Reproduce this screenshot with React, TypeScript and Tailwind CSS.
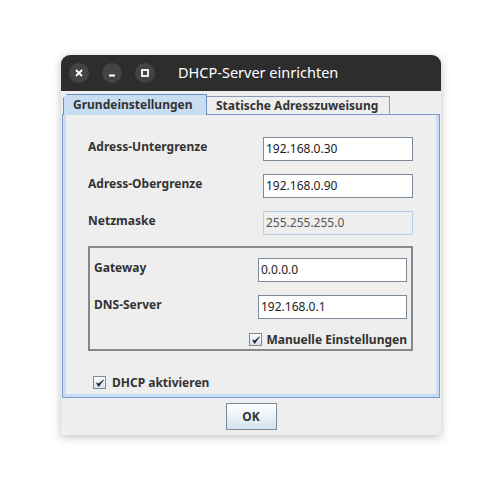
import { useState } from "react";

const font = { fontFamily: '"Noto Sans", "Open Sans", sans-serif' };

function CheckMark() {
  return (
    <svg width="8" height="8" viewBox="0 0 8 8">
      <path d="M0.5 4 L2.6 7.5 L7.6 0.8 L2.8 4.8 Z" fill="#1a1a1a" stroke="#1a1a1a" strokeWidth="0.6" strokeLinejoin="round" />
    </svg>
  );
}

function CheckBox({ checked, onToggle }: { checked: boolean; onToggle: () => void }) {
  return (
    <button
      onClick={onToggle}
      className="w-[13px] h-[13px] border border-[#7a8a99] bg-gradient-to-b from-white to-[#d4e2f0] flex items-center justify-center shrink-0"
    >
      {checked && <CheckMark />}
    </button>
  );
}

function Field({ value, disabled }: { value: string; disabled?: boolean }) {
  return (
    <div
      className={
        disabled
          ? "h-[24px] border border-[#b8cfe5] bg-[#eeeeee] text-[#555] text-[12px] pl-[2px] flex items-center"
          : "h-[24px] border border-[#7a8a99] bg-white text-[#222] text-[12px] pl-[2px] flex items-center"
      }
    >
      {value}
    </div>
  );
}

export default function App() {
  const [manual, setManual] = useState(true);
  const [dhcp, setDhcp] = useState(true);

  return (
    <div className="w-[502px] h-[502px] bg-white flex justify-center pt-[55px]" style={font}>
      <div className="w-[380px] h-[380px] rounded-t-[9px] overflow-hidden bg-[#eeeeee] flex flex-col shadow-[0_2px_10px_rgba(0,0,0,0.25)]">
        {/* title bar */}
        <div className="h-[36px] bg-[#2d2d2d] flex items-center pl-[8px] shrink-0">
          <div className="flex gap-[13px]">
            <div className="w-[20px] h-[20px] rounded-full bg-[#434343] flex items-center justify-center">
              <svg width="8" height="8" viewBox="0 0 8 8">
                <path d="M1 1 L7 7 M7 1 L1 7" stroke="#fff" strokeWidth="1.8" />
              </svg>
            </div>
            <div className="w-[20px] h-[20px] rounded-full bg-[#434343] flex items-center justify-center">
              <svg width="8" height="8" viewBox="0 0 8 8">
                <path d="M1 6.5 L7 6.5" stroke="#fff" strokeWidth="1.8" />
              </svg>
            </div>
            <div className="w-[20px] h-[20px] rounded-full bg-[#434343] flex items-center justify-center">
              <svg width="8" height="8" viewBox="0 0 8 8">
                <rect x="1" y="1" width="6" height="6" fill="none" stroke="#fff" strokeWidth="1.8" />
              </svg>
            </div>
          </div>
          <span className="ml-[23px] text-white text-[14.5px]">DHCP-Server einrichten</span>
        </div>

        {/* tabs */}
        <div className="flex items-end pl-[2px] mt-[3px] h-[20px] relative z-10">
          <div className="h-[21px] w-[144px] -mb-px bg-[#c8ddf2] border border-b-0 border-[#6b8fc6] [clip-path:polygon(4px_0,100%_0,100%_100%,0_100%,0_4px)] flex items-center pl-[9px] text-[12px] font-bold text-[#333]">
            Grundeinstellungen
          </div>
          <div className="h-[18px] w-[183px] border border-b-0 border-l-0 border-[#8a9ab8] bg-[#eeeeee] flex items-center pl-[9px] text-[12px] font-bold text-[#333]">
            Statische Adresszuweisung
          </div>
        </div>

        {/* tab panel */}
        <div className="mx-[1px] border border-[#7b9ad0]">
          <div className="border-[3px] border-[#c9dcf1] border-t-0 pl-[22px] pt-[22px] pb-[5px]">
            <div className="grid grid-cols-[175px_150px] gap-y-[13px]">
              <span className="text-[12px] font-bold text-[#333] pt-[1px]">Adress-Untergrenze</span>
              <Field value="192.168.0.30" />
              <span className="text-[12px] font-bold text-[#333] pt-[1px]">Adress-Obergrenze</span>
              <Field value="192.168.0.90" />
              <span className="text-[12px] font-bold text-[#333] pt-[1px]">Netzmaske</span>
              <Field value="255.255.255.0" disabled />
            </div>

            <div className="w-[325px] mt-[11px] border-2 border-[#888] pl-[4px] pr-[4px] pt-[10px] pb-[3px]">
              <div className="grid grid-cols-[164px_149px] gap-y-[13px]">
                <span className="text-[12px] font-bold text-[#333] pt-[1px]">Gateway</span>
                <Field value="0.0.0.0" />
                <span className="text-[12px] font-bold text-[#333] pt-[1px]">DNS-Server</span>
                <Field value="192.168.0.1" />
              </div>
              <div className="flex items-center justify-end gap-[4px] mt-[14px] h-[13px]">
                <CheckBox checked={manual} onToggle={() => setManual(!manual)} />
                <span className="text-[12px] leading-[13px] font-bold text-[#333]">Manuelle Einstellungen</span>
              </div>
            </div>

            <div className="flex items-center gap-[6px] mt-[25px] pl-[5px] h-[13px]">
              <CheckBox checked={dhcp} onToggle={() => setDhcp(!dhcp)} />
              <span className="text-[12px] leading-[13px] font-bold text-[#333]">DHCP aktivieren</span>
            </div>
          </div>
        </div>

        {/* footer */}
        <div className="flex justify-center pt-[5px]">
          <button className="w-[51px] h-[27px] border border-[#7a8a99] bg-gradient-to-b from-white to-[#d6e3f0] text-[12px] font-bold text-[#333]">
            OK
          </button>
        </div>
      </div>
    </div>
  );
}
